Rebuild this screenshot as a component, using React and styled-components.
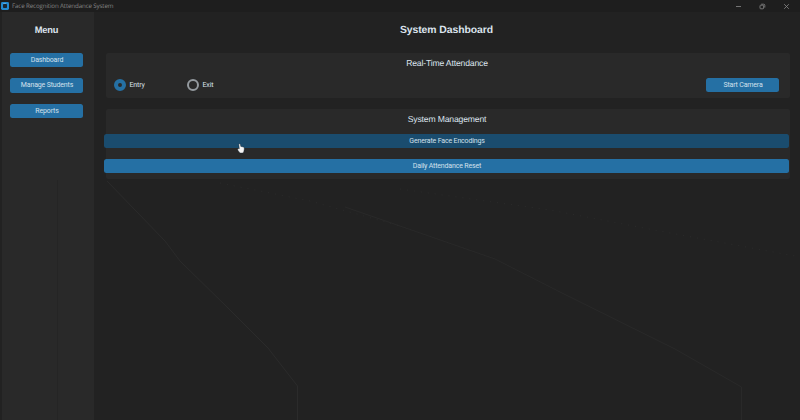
import React from "react";
import styled, { createGlobalStyle } from "styled-components";

const GlobalStyle = createGlobalStyle`
  * { box-sizing: border-box; }
  body { margin: 0; background: #222222; overflow: hidden; }
`;

const Window = styled.div`
  position: relative;
  width: 800px;
  height: 420px;
  display: flex;
  flex-direction: column;
  background: #222222;
  color: #dce4ee;
  font-family: Roboto, sans-serif;
  text-rendering: geometricPrecision;
  overflow: hidden;
`;

const TitleBar = styled.header`
  height: 12px;
  flex: none;
  display: flex;
  align-items: center;
  padding-left: 1px;
  background: #1e1e1e;
`;

const AppTitle = styled.span`
  flex: 1;
  margin-left: 3px;
  color: #858585;
  font: 6.2px/12px "Open Sans", sans-serif;
  letter-spacing: -0.13px;
`;

const WindowControls = styled.div`
  display: flex;
  gap: 17px;
  padding-right: 10px;
  color: #8a8a8a;
`;

const Body = styled.div`
  flex: 1;
  display: flex;
`;

const Sidebar = styled.nav`
  width: 92px;
  margin-left: 2px;
  padding: 0 11px 0 8px;
  display: flex;
  flex-direction: column;
  background: #292929;
`;

const MenuTitle = styled.h2`
  margin: 12px 0 17px;
  height: 12px;
  text-align: center;
  font: bold 9.3px/12px "Liberation Sans", sans-serif;
  letter-spacing: -0.18px;
`;

const MenuItems = styled.div`
  display: flex;
  flex-direction: column;
  gap: 11.2px;
`;

const Button = styled.button`
  width: ${(p) => p.$width || "100%"};
  height: 14.2px;
  flex: none;
  padding: 0 0 0 1px;
  border: 0;
  border-radius: 2.5px;
  background: ${(p) => (p.$hovered ? "#1a4c6e" : "#2570a4")};
  color: #d3e0ec;
  font: 7px/14px Roboto, sans-serif;
  letter-spacing: -0.16px;
`;

const Main = styled.main`
  width: 686px;
  margin-left: 10px;
  display: flex;
  flex-direction: column;
`;

const PageTitle = styled.h1`
  margin: 12px 1px 16px 0;
  height: 13px;
  text-align: center;
  font: bold 10.4px/13px "Liberation Sans", sans-serif;
  letter-spacing: -0.06px;
`;

const Panel = styled.section`
  height: ${(p) => p.$height}px;
  margin: 0 0 11px 2px;
  border-radius: 2px;
  background: #292929;
`;

const PanelTitle = styled.h3`
  margin: 0 2px 0 0;
  padding-top: 4px;
  height: 25px;
  text-align: center;
  font: normal 8.6px/12px "Liberation Sans", sans-serif;
  letter-spacing: -0.15px;
`;

const AttendanceRow = styled.div`
  display: flex;
  align-items: center;
  height: 14px;
  padding: 0 11px 0 8px;
`;

const RadioOption = styled.label`
  width: 73px;
  display: flex;
  align-items: center;
  gap: 3.5px;
  font: 7px/14px Roboto, sans-serif;
  letter-spacing: -0.16px;
`;

const RadioMark = styled.span`
  width: 12px;
  height: 12px;
  border-radius: 50%;
  border: ${(p) => (p.$checked ? "4px solid #2570a4" : "2px solid #949a9f")};
`;

const Spacer = styled.div`
  flex: 1;
`;

const Actions = styled.div`
  display: flex;
  flex-direction: column;
  gap: 11px;
  width: 685px;
  margin-left: -2px;
`;

const Overlay = styled.svg`
  position: absolute;
  inset: 0;
  pointer-events: none;
`;

const Pointer = styled.svg`
  position: absolute;
  left: 237px;
  top: 143px;
`;

function AppIcon() {
  return (
    <svg width="8" height="10" viewBox="0 0 8 10">
      <rect x="0" y="1" width="8" height="8" rx="1.4" fill="#238bd3" />
      <rect x="2" y="3" width="4" height="4" rx="0.8" fill="#1b2630" />
      <path d="M2.2 2.5H5" stroke="#78bde8" strokeWidth="0.6" />
    </svg>
  );
}

export default function App() {
  return (
    <Window>
      <GlobalStyle />
      <TitleBar>
        <AppIcon />
        <AppTitle>Face Recognition Attendance System</AppTitle>
        <WindowControls>
          <svg width="7" height="7" viewBox="0 0 7 7" stroke="currentColor" strokeWidth="0.8">
            <path d="M1 3.5H6" />
          </svg>
          <svg width="7" height="7" viewBox="0 0 7 7" fill="none" stroke="currentColor" strokeWidth="0.8">
            <rect x="1" y="2.2" width="3.6" height="3.6" rx="0.7" />
            <path d="M2.2 1.2H4.6Q5.8 1.2 5.8 2.4V4.6" />
          </svg>
          <svg width="7" height="7" viewBox="0 0 7 7" stroke="currentColor" strokeWidth="0.8">
            <path d="M1.2 1.2L5.8 5.8M5.8 1.2L1.2 5.8" />
          </svg>
        </WindowControls>
      </TitleBar>
      <Body>
        <Sidebar>
          <MenuTitle>Menu</MenuTitle>
          <MenuItems>
            <Button>Dashboard</Button>
            <Button>Manage Students</Button>
            <Button>Reports</Button>
          </MenuItems>
        </Sidebar>
        <Main>
          <PageTitle>System Dashboard</PageTitle>
          <Panel $height={45}>
            <PanelTitle>Real-Time Attendance</PanelTitle>
            <AttendanceRow>
              <RadioOption>
                <RadioMark $checked />
                Entry
              </RadioOption>
              <RadioOption>
                <RadioMark />
                Exit
              </RadioOption>
              <Spacer />
              <Button $width="73px">Start Camera</Button>
            </AttendanceRow>
          </Panel>
          <Panel $height={70}>
            <PanelTitle>System Management</PanelTitle>
            <Actions>
              <Button $hovered>Generate Face Encodings</Button>
              <Button>Daily Attendance Reset</Button>
            </Actions>
          </Panel>
        </Main>
      </Body>
      <Overlay width="800" height="420" viewBox="0 0 800 420" fill="none" stroke="#2b2b2b">
        <path d="M107 181L136 211L165 241L180 261L227 307L268 348L297.5 386V420" />
        <path d="M345 207L400 226L495 259L560 292L675 349L741.5 387V420" stroke="#292929" />
        <path d="M220 183L310 201L400 226M400 189L550 210L670 233L795 256" strokeDasharray="1 6" />
        <path d="M57.5 180V420" stroke="#252525" />
      </Overlay>
      <Pointer width="8" height="11" viewBox="0 0 8 11">
        <path
          d="M1.8 1Q2.6 .3 3.3 1.2L3.8 3.4L6.4 4Q7.4 4.4 7.3 6L6.8 8.5L6 10H3L1 7.4Q.2 5.8 1.2 5.4L2.3 5.8Z"
          fill="#f4f4f4"
          stroke="#172632"
          strokeWidth="0.4"
        />
      </Pointer>
    </Window>
  );
}
